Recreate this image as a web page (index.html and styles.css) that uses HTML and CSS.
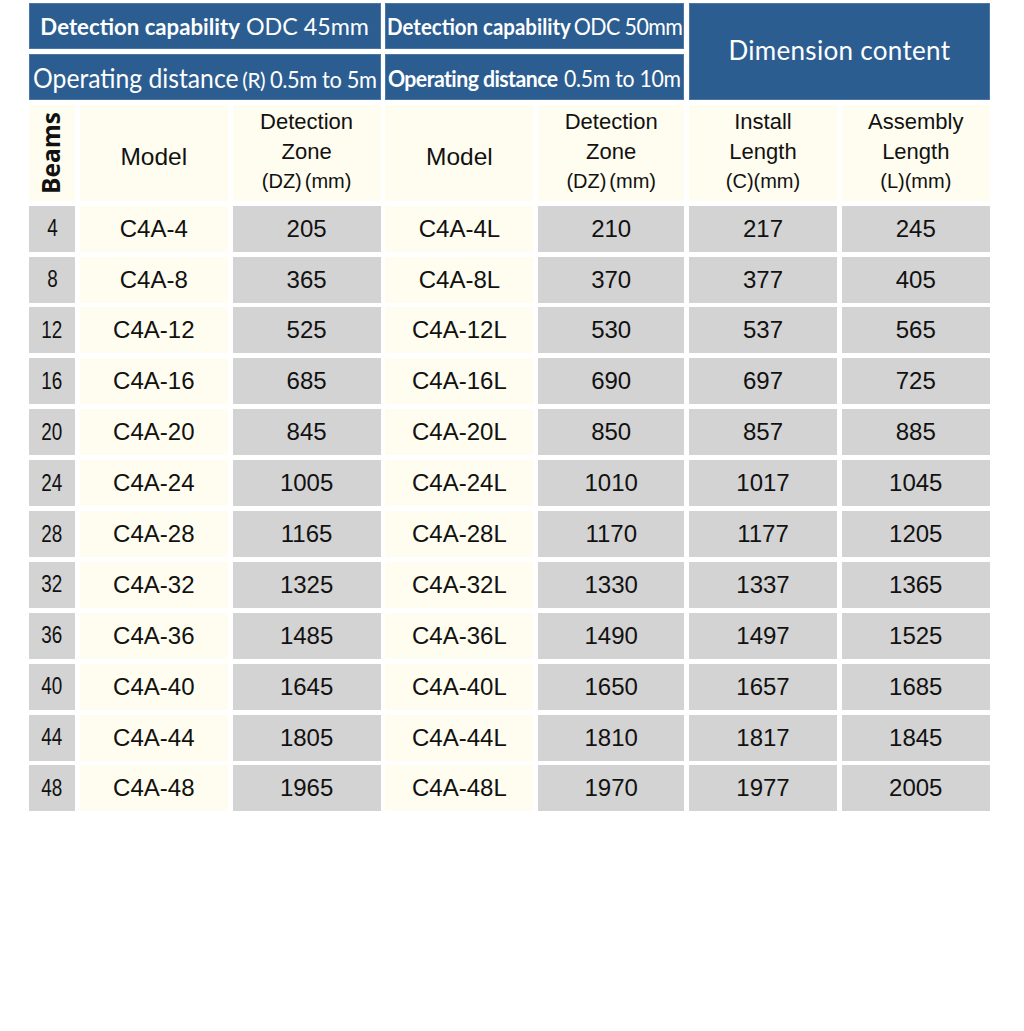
FILE: index.html
```html
<!DOCTYPE html>
<html>
<head>
<meta charset="utf-8">
<link rel="stylesheet" href="styles.css">
</head>
<body>
<div class="table">
  <div class="hd g1 r1"><span class="line s1"><span class="b">Detection capability</span><span class="r">ODC 45mm</span></span></div>
  <div class="hd g2 r1"><span class="line s2"><span class="b">Detection capability</span><span class="r cond2">ODC 50mm</span></span></div>
  <div class="hd g3">Dimension content</div>
  <div class="hd g1 r2"><span class="line s3"><span class="op">Operating distance</span><span class="op2">(R)</span><span class="op2b">0.5m to 5m</span></span></div>
  <div class="hd g2 r2"><span class="line s4"><span class="op3">Operating distance</span><span class="op4">0.5m to 10m</span></span></div>

  <div class="th beams"><span class="vt">Beams</span></div>
  <div class="th big">Model</div>
  <div class="th"><span class="l1">Detection</span><span class="l2">Zone</span><span class="l3">(DZ)<i class="sp"></i>(mm)</span></div>
  <div class="th big">Model</div>
  <div class="th"><span class="l1">Detection</span><span class="l2">Zone</span><span class="l3">(DZ)<i class="sp"></i>(mm)</span></div>
  <div class="th"><span class="l1">Install</span><span class="l2">Length</span><span class="l3">(C)(mm)</span></div>
  <div class="th"><span class="l1">Assembly</span><span class="l2">Length</span><span class="l3">(L)(mm)</span></div>
</div>
<script src="app.js"></script>
</body>
</html>
```

FILE: app.js
```js
(function () {
  var t = document.querySelector('.table');
  for (var i = 0; i < 12; i++) {
    var beams = 4 + i * 4;
    var dz1 = 205 + i * 160;
    var vals = [
      ['n gray', beams],
      ['cream', 'C4A-' + beams],
      ['gray', dz1],
      ['cream', 'C4A-' + beams + 'L'],
      ['gray', dz1 + 5],
      ['gray', dz1 + 12],
      ['gray', dz1 + 40]
    ];
    vals.forEach(function (v) {
      var d = document.createElement('div');
      d.className = 'td ' + v[0];
      var s = document.createElement('span');
      s.textContent = v[1];
      d.appendChild(s);
      t.appendChild(d);
    });
  }
})();
```

FILE: styles.css
```css
html, body {
  margin: 0;
  padding: 0;
  background: #ffffff;
}
body {
  padding: 3px 0 0 29px;
  font-family: "Liberation Sans", Arial, sans-serif;
}
.table {
  display: grid;
  grid-template-columns: 46px 148px 148px 148px 146px 148px 148px;
  grid-template-rows: 46px 46px 96px repeat(12, 46px);
  column-gap: 4.8px;
  row-gap: 4.9px;
}
.hd {
  background: #2c5d91;
  color: #ffffff;
  font-family: Lato, "Open Sans", sans-serif;
  display: flex;
  align-items: center;
  justify-content: center;
  white-space: nowrap;
  box-shadow: inset 0 0 0 1px #4d77a4;
}
.line {
  display: inline-flex;
  align-items: baseline;
  flex: none;
}
.s1 { transform: scaleX(1.01); }
.s2 { transform: scaleX(0.93); }
.s3 { transform: scaleX(0.95); }
.s4 { transform: scaleX(0.925); }
.g1 { grid-column: 1 / 4; }
.g2 { grid-column: 4 / 6; }
.g3 {
  grid-column: 6 / 8;
  grid-row: 1 / 3;
  font-size: 26px;
  letter-spacing: 0.3px;
  padding-bottom: 3px;
}
.r1 .b { font-weight: 700; font-size: 22px; }
.r1 .r { font-weight: 400; font-size: 23px; margin-left: 6px; }
.g2.r1 .cond2 { letter-spacing: -0.6px; margin-left: 3px; }
.r2 { padding-top: 2px; }
.op { font-size: 26px; font-weight: 400; }
.op2 { font-size: 22px; letter-spacing: -0.5px; margin-left: 4px; }
.op2b { font-size: 23px; letter-spacing: -0.4px; margin-left: 5px; }
.op3 { font-size: 23px; font-weight: 700; letter-spacing: -0.6px; }
.op4 { font-size: 23px; letter-spacing: -0.3px; margin-left: 7px; }

.th {
  background: #fffdef;
  color: #111111;
  display: flex;
  flex-direction: column;
  align-items: center;
  justify-content: center;
  font-size: 22px;
  line-height: 1;
}
.th.big { font-size: 24.5px; padding-top: 8px; }
.th .l1, .th .l2, .th .l3 {
  box-sizing: border-box;
  display: flex;
  align-items: flex-end;
}
.th .l1 { height: 31px; padding-bottom: 3px; }
.th .l2 { height: 30px; padding-bottom: 3px; }
.th .l3 { font-size: 20px; height: 27px; padding-bottom: 2px; }
.sp { display: inline-block; width: 3px; }
.th:not(.big):not(.beams) { justify-content: flex-start; }
.vt {
  writing-mode: vertical-rl;
  transform: rotate(180deg);
  font-family: "Open Sans", "Noto Sans", sans-serif;
  font-weight: 700;
  font-size: 24.5px;
  line-height: 1;
  padding-left: 2px;
}

.td {
  display: flex;
  align-items: center;
  justify-content: center;
  font-size: 24px;
  color: #111111;
}
.td.gray { background: #d3d3d3; }
.td.cream { background: #fffdef; }
.td.n span {
  display: inline-block;
  font-size: 23px;
  transform: scaleX(0.82);
}
```
